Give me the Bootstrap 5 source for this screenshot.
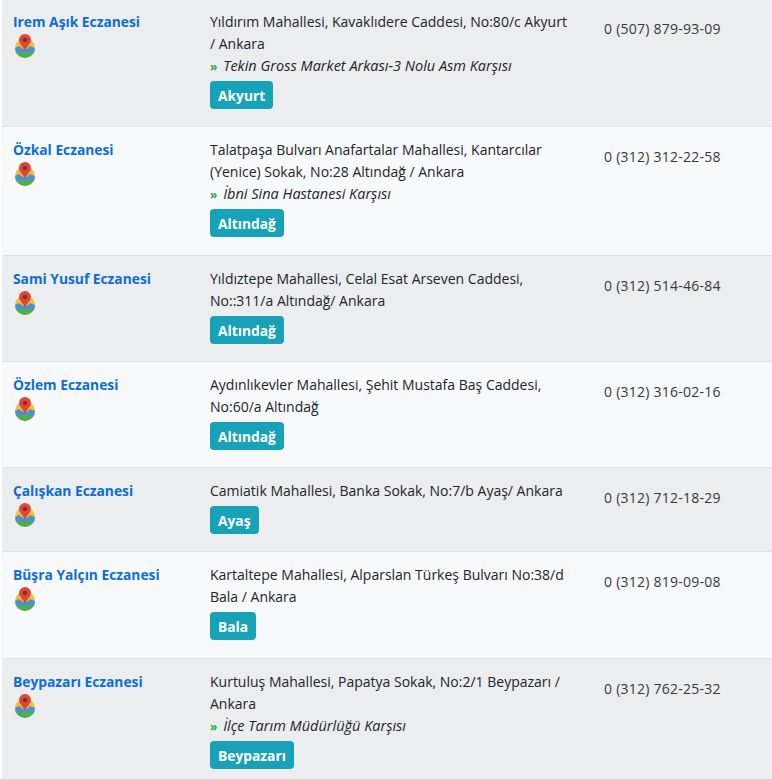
<!DOCTYPE html>
<html lang="tr"><head><meta charset="utf-8">
<link rel="stylesheet" href="https://cdn.jsdelivr.net/npm/bootstrap@5.3.0/dist/css/bootstrap.min.css">
<style>
body{font-family:"Open Sans","Noto Sans",sans-serif;font-size:14px;line-height:22px;color:#212529;background:#fff;overflow:hidden}
.ecz-table{table-layout:fixed;width:770px;margin:-2px 0 0 2px;border-collapse:collapse}
.ecz-table td{padding:12px 12px 17.3px;vertical-align:top;border-top:1px solid #dee2e6;border-bottom:0;box-shadow:none;font-size:14px;line-height:22px;color:#212529}
.ecz-table td:first-child{padding-left:11px}
.ecz-table td:nth-child(2){padding-right:22px}
.ecz-table td:nth-child(3){padding-top:19px;color:#343a40;letter-spacing:.25px}
.ecz-table tr:nth-child(odd) td{background:#ebedef}
.ecz-table tr:nth-child(even) td{background:#f8f9fb}
.ecz-c1{width:196px}.ecz-c2{width:394px}
.ecz-name{color:#0b6ed8;font-weight:700;font-size:13.8px;text-decoration:none;display:block}
.ecz-pin{display:block;width:20px;height:24px;margin:1px 0 0 2px}
.ecz-note{font-style:italic;font-size:14.5px}
.ecz-arrow{color:#28a745;font-style:normal;font-weight:700;font-size:12px;line-height:1;margin-right:2px}
.ecz-tag{display:inline-block;background:#17a2b8;color:#fff;font-weight:700;font-size:13.8px;line-height:18px;padding:6px 8px 4px;border-radius:4px;margin-top:4px;text-decoration:none}
</style></head><body>
<svg width="0" height="0" class="position-absolute"><defs>
<clipPath id="disc"><circle cx="10" cy="14" r="10"/></clipPath>
<symbol id="pin" viewBox="0 0 20 24">
<g clip-path="url(#disc)">
<rect y="4" width="20" height="20" fill="#f3c02f"/>
<path d="M0 14l4-2 4 3 4 0 3-3 5 2v6H0z" fill="#4a8fdc"/>
<path d="M0 17.500c3 1 6 .5 10 .5s7 .5 10-.5V24H0z" fill="#4caf50"/>
</g>
<path d="M10 0a6 6 0 0 0-6 6c0 3.600 4 6.500 6 10.500 2-4 6-6.900 6-10.500a6 6 0 0 0-6-6z" fill="#d9483b"/>
<circle cx="10" cy="6" r="2.200" fill="#8f2a24"/>
</symbol></defs></svg>
<table class="table ecz-table mb-0"><colgroup><col class="ecz-c1"><col class="ecz-c2"><col></colgroup><tbody>
<tr><td><a class="ecz-name" href="#">Irem Aşık Eczanesi</a><svg class="ecz-pin"><use href="#pin"/></svg></td>
<td>Yıldırım Mahallesi, Kavaklıdere Caddesi, No:80/c Akyurt / Ankara<br><span class="ecz-note"><span class="ecz-arrow">»</span> Tekin Gross Market Arkası-3 Nolu Asm Karşısı</span><br><a class="ecz-tag" href="#">Akyurt</a></td>
<td>0 (507) 879-93-09</td></tr>
<tr><td><a class="ecz-name" href="#">Özkal Eczanesi</a><svg class="ecz-pin"><use href="#pin"/></svg></td>
<td>Talatpaşa Bulvarı Anafartalar Mahallesi, Kantarcılar (Yenice) Sokak, No:28 Altındağ / Ankara<br><span class="ecz-note"><span class="ecz-arrow">»</span> İbni Sina Hastanesi Karşısı</span><br><a class="ecz-tag" href="#">Altındağ</a></td>
<td>0 (312) 312-22-58</td></tr>
<tr><td><a class="ecz-name" href="#">Sami Yusuf Eczanesi</a><svg class="ecz-pin"><use href="#pin"/></svg></td>
<td>Yıldıztepe Mahallesi, Celal Esat Arseven Caddesi, No::311/a Altındağ/ Ankara<br><a class="ecz-tag" href="#">Altındağ</a></td>
<td>0 (312) 514-46-84</td></tr>
<tr><td><a class="ecz-name" href="#">Özlem Eczanesi</a><svg class="ecz-pin"><use href="#pin"/></svg></td>
<td>Aydınlıkevler Mahallesi, Şehit Mustafa Baş Caddesi, No:60/a Altındağ<br><a class="ecz-tag" href="#">Altındağ</a></td>
<td>0 (312) 316-02-16</td></tr>
<tr><td><a class="ecz-name" href="#">Çalışkan Eczanesi</a><svg class="ecz-pin"><use href="#pin"/></svg></td>
<td>Camiatik Mahallesi, Banka Sokak, No:7/b Ayaş/ Ankara<br><a class="ecz-tag" href="#">Ayaş</a></td>
<td>0 (312) 712-18-29</td></tr>
<tr><td><a class="ecz-name" href="#">Büşra Yalçın Eczanesi</a><svg class="ecz-pin"><use href="#pin"/></svg></td>
<td>Kartaltepe Mahallesi, Alparslan Türkeş Bulvarı No:38/d Bala / Ankara<br><a class="ecz-tag" href="#">Bala</a></td>
<td>0 (312) 819-09-08</td></tr>
<tr><td><a class="ecz-name" href="#">Beypazarı Eczanesi</a><svg class="ecz-pin"><use href="#pin"/></svg></td>
<td>Kurtuluş Mahallesi, Papatya Sokak, No:2/1 Beypazarı / Ankara<br><span class="ecz-note"><span class="ecz-arrow">»</span> İlçe Tarım Müdürlüğü Karşısı</span><br><a class="ecz-tag" href="#">Beypazarı</a></td>
<td>0 (312) 762-25-32</td></tr>
</tbody></table>
</body></html>
